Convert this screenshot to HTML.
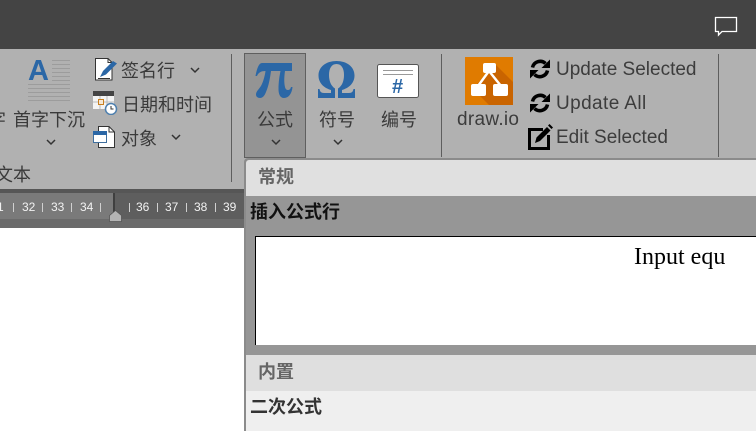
<!DOCTYPE html>
<html>
<head>
<meta charset="utf-8">
<style>
html,body{margin:0;padding:0;background:#fff}
#p{position:relative;width:756px;height:431px;overflow:hidden;background:#fff;font-family:"Liberation Sans","Noto Sans CJK SC",sans-serif}
#p div,#p svg{position:absolute}
.t{font-size:18px;line-height:24px;color:#3a3a3a;white-space:nowrap}
.e{font-family:"Liberation Sans",sans-serif;font-size:19px;line-height:24px;color:#3c3c3c;white-space:nowrap}
.r{font-size:12px;line-height:14px;color:#f2f2f2;top:200px;white-space:nowrap;font-weight:normal}
.k{width:1px;height:9px;background:#d0d0d0;top:203px}
.b{font-size:18px;line-height:24px;font-weight:bold;white-space:nowrap}
</style>
</head>
<body>
<div id="p">
<div style="left:0;top:0;width:756px;height:49px;background:#444"></div>
<div style="left:0;top:49px;width:756px;height:140px;background:#b1b1b1"></div>
<svg style="left:714px;top:16px" width="24" height="22" viewBox="0 0 24 22"><path d="M1.500 1.500H22.500V15.500H8L4.500 19V15.500H1.500Z" fill="#444" stroke="#fff" stroke-width="1.300"/></svg>

<!-- ruler -->
<div style="left:0;top:189px;width:756px;height:39px;background:#6b6b6b"></div>
<div style="left:0;top:189px;width:756px;height:4px;background:#565656"></div>
<div style="left:0;top:193px;width:114px;height:26px;background:#7a7a7a"></div>
<div style="left:114px;top:193px;width:642px;height:26px;background:#5e5e5e"></div>
<div style="left:113px;top:193px;width:2px;height:26px;background:#3f3f3f"></div>
<div class="r" style="left:-3px">1</div><div class="k" style="left:13px"></div>
<div class="r" style="left:22px">32</div><div class="k" style="left:42px"></div>
<div class="r" style="left:51px">33</div><div class="k" style="left:71px"></div>
<div class="r" style="left:80px">34</div><div class="k" style="left:100px"></div>
<div class="k" style="left:129px"></div>
<div class="r" style="left:136px">36</div><div class="k" style="left:157px"></div>
<div class="r" style="left:165px">37</div><div class="k" style="left:186px"></div>
<div class="r" style="left:194px">38</div><div class="k" style="left:215px"></div>
<div class="r" style="left:223px">39</div>
<svg style="left:109px;top:210px" width="13" height="12" viewBox="0 0 13 12"><path d="M.5 5.500L6.500.5L12.500 5.500V11.500H.5Z" fill="#b4b4b4" stroke="#555" stroke-width=".8"/></svg>

<!-- 首字下沉 -->
<svg style="left:28px;top:59px" width="43" height="43" viewBox="0 0 43 43" fill="none" stroke="#9c9c9c" stroke-width="1"><path d="M24 1.500H42M24 5.500H42M24 9.500H42M24 13.500H42M24 17.500H42M24 21.500H42M0 25.500H42M0 29.500H42M0 33.500H42M0 37.500H42M0 41.500H42"/></svg>
<div style="left:28px;top:54px;font:bold 29px/34px 'Liberation Sans',sans-serif;color:#2b67a6">A</div>
<div class="t" style="left:-12px;top:108px">字</div>
<div class="t" style="left:13px;top:108px">首字下沉</div>
<svg style="left:46px;top:139px" width="10" height="7"><path d="M1 1L5 5L9 1" fill="none" stroke="#333" stroke-width="1.500"/></svg>
<div class="t" style="left:-5px;top:163px">文本</div>

<!-- 签名行 -->
<svg style="left:95px;top:58px" width="24" height="23" viewBox="0 0 24 23"><path d="M.5.500H13L17 4.500V22H.5Z" fill="#fff" stroke="#333"/><path d="M13 .5V4.500H17" fill="none" stroke="#333"/><path d="M5 19L8 13L18 3L22 5.500L11 16.500Z" fill="#2b67a6"/><path d="M3 20.500H15" stroke="#333"/></svg>
<div class="t" style="left:121px;top:59px">签名行</div>
<svg style="left:190px;top:67px" width="10" height="7"><path d="M1 1L5 5L9 1" fill="none" stroke="#333" stroke-width="1.500"/></svg>
<!-- 日期和时间 -->
<svg style="left:93px;top:91px" width="25" height="24" viewBox="0 0 25 24"><rect x="0" y="0" width="21" height="18" fill="#f4f4f4"/><rect x="0" y="0" width="21" height="5" fill="#444"/><path d="M0 11H21M7 5V18M14 5V18" stroke="#bbb"/><rect x="5.500" y="8.500" width="5" height="5" fill="#f6e8d5" stroke="#c87f1f"/><circle cx="18" cy="18" r="5.500" fill="#fff" stroke="#4d7fae" stroke-width="1.500"/><path d="M18 15V18H20.500" fill="none" stroke="#333"/></svg>
<div class="t" style="left:122px;top:93px">日期和时间</div>
<!-- 对象 -->
<svg style="left:93px;top:126px" width="23" height="22" viewBox="0 0 23 22"><path d="M5.500.5H16L21.500 6V21.500H5.500Z" fill="#fff" stroke="#333"/><path d="M16 .5V6H21.500" fill="none" stroke="#333"/><rect x=".5" y="5.500" width="13" height="11" fill="#fff" stroke="#3f6f9e"/><rect x="0" y="5" width="14" height="4" fill="#2b67a6"/></svg>
<div class="t" style="left:121px;top:127px">对象</div>
<svg style="left:171px;top:134px" width="10" height="7"><path d="M1 1L5 5L9 1" fill="none" stroke="#333" stroke-width="1.500"/></svg>
<div style="left:231px;top:54px;width:1px;height:128px;background:#5e5e5e"></div>

<!-- 公式 button -->
<div style="left:244px;top:53px;width:60px;height:103px;background:#949494;border:1px solid #5f5f5f"></div>
<svg style="left:254px;top:60px" width="40" height="40" viewBox="0 0 40 40"><path d="M8 3H38V11H31C30 18 30 23 31 27C31.500 29.500 33 30 34 30C35.500 30 36.500 29 37 27H38.500C38 33 35 38 30 38C26 38 24.500 34 24.500 29C24.500 22 25.500 16 26.500 11H17C16 18 15 25 12 32C10.500 36 8.500 38 6 38C3.500 38 2 36.500 2 34.500C2 31 5.500 29 7.500 25C9.500 21 11 15 11.500 11C7 11 4.500 12.500 3 16H1.500C3 8 5 3 8 3Z" fill="#2b67a6"/></svg>
<svg style="left:317px;top:60px" width="40" height="40" viewBox="0 0 40 40"><path d="M1 38V29H2.500C3 31.500 4 33 7 33H14V30C7 28 1.500 23 1.500 15.500C1.500 6.500 9.500 1 19.500 1C29.500 1 37.500 6.500 37.500 15.500C37.500 23 32 28 25 30V33H32C35 33 36 31.500 36.500 29H38V38H21V28.500C25 26 27 21 27 15C27 8.500 24.500 4 19.500 4C14.500 4 12 8.500 12 15C12 21 14 26 18 28.500V38Z" fill="#2b67a6"/></svg>
<div class="t" style="left:257px;top:108px">公式</div>
<svg style="left:271px;top:139px" width="10" height="7"><path d="M1 1L5 5L9 1" fill="none" stroke="#333" stroke-width="1.500"/></svg>
<div class="t" style="left:319px;top:108px">符号</div>
<svg style="left:333px;top:139px" width="10" height="7"><path d="M1 1L5 5L9 1" fill="none" stroke="#333" stroke-width="1.500"/></svg>
<svg style="left:377px;top:64px" width="42" height="35" viewBox="0 0 42 35"><rect x=".5" y=".5" width="41" height="33" rx="2" fill="#fff" stroke="#555"/><path d="M6 6.500H36M6 10.500H36" stroke="#999"/></svg>
<div style="left:392px;top:77px;font:bold 20px/20px 'Liberation Sans',sans-serif;color:#2b67a6">#</div>
<div class="t" style="left:381px;top:108px">编号</div>
<div style="left:441px;top:54px;width:1px;height:103px;background:#5e5e5e"></div>

<!-- draw.io -->
<svg style="left:465px;top:57px" width="48" height="48" viewBox="0 0 48 48"><rect width="48" height="48" fill="#e07b00"/><path d="M31 8L48 25V48H24L8 32L18 20Z" fill="#c96400"/><path d="M24 14L13 29M24 14L36 29" stroke="#fff" stroke-width="2.500"/><rect x="18" y="6" width="13" height="10" rx="2" fill="#fff"/><rect x="6" y="27" width="15" height="12" rx="2" fill="#fff"/><rect x="28" y="27" width="15" height="12" rx="2" fill="#fff"/></svg>
<div class="e" style="left:457px;top:108px;letter-spacing:.3px">draw.io</div>
<svg style="left:529px;top:58px" width="22" height="22" viewBox="0 0 22 22"><path d="M3.500 9.500A7.800 7.800 0 0 1 16.500 5.500M18.500 12.500A7.800 7.800 0 0 1 5.500 16.500" fill="none" stroke="#000" stroke-width="3.600"/><path d="M21 1.500V10H12.500ZM1 20.500V12H9.500Z" fill="#000"/></svg>
<div class="e" style="left:556px;top:58px">Update Selected</div>
<svg style="left:529px;top:92px" width="22" height="22" viewBox="0 0 22 22"><path d="M3.500 9.500A7.800 7.800 0 0 1 16.500 5.500M18.500 12.500A7.800 7.800 0 0 1 5.500 16.500" fill="none" stroke="#000" stroke-width="3.600"/><path d="M21 1.500V10H12.500ZM1 20.500V12H9.500Z" fill="#000"/></svg>
<div class="e" style="left:556px;top:92px;letter-spacing:.4px">Update All</div>
<svg style="left:528px;top:124px" width="25" height="26" viewBox="0 0 25 26"><path d="M15 5.500H1.500V24.500H20.500V11" fill="none" stroke="#000" stroke-width="3"/><path d="M7 19L8.500 13.500L19 3L22.500 6.500L12 17Z" fill="#000"/><path d="M20 1.500L21.500 0L25 3.500L23.500 5Z" fill="#000"/></svg>
<div class="e" style="left:556px;top:126px">Edit Selected</div>
<div style="left:718px;top:54px;width:1px;height:103px;background:#5e5e5e"></div>

<!-- panel -->
<div style="left:244px;top:158px;width:512px;height:273px;background:#8b8b8b;border-radius:4px 0 0 0"></div>
<div style="left:246px;top:160px;width:510px;height:36px;background:#e0e0e0;border-radius:3px 0 0 0"></div>
<div class="b" style="left:258px;top:165px;color:#666">常规</div>
<div style="left:246px;top:196px;width:510px;height:159px;background:#969696"></div>
<div class="b" style="left:250px;top:200px;color:#111">插入公式行</div>
<div style="left:255px;top:236px;width:501px;height:109px;background:#fff;border-top:1px solid #000;border-left:1px solid #000;box-sizing:border-box"></div>
<div style="left:634px;top:243px;font:24px/28px 'Liberation Serif',serif;color:#000;white-space:nowrap">Input equ</div>
<div style="left:246px;top:355px;width:510px;height:36px;background:#dfdfdf"></div>
<div class="b" style="left:258px;top:360px;color:#666">内置</div>
<div style="left:246px;top:391px;width:510px;height:40px;background:#efefef"></div>
<div class="b" style="left:250px;top:395px;color:#333">二次公式</div>
</div>
</body>
</html>
